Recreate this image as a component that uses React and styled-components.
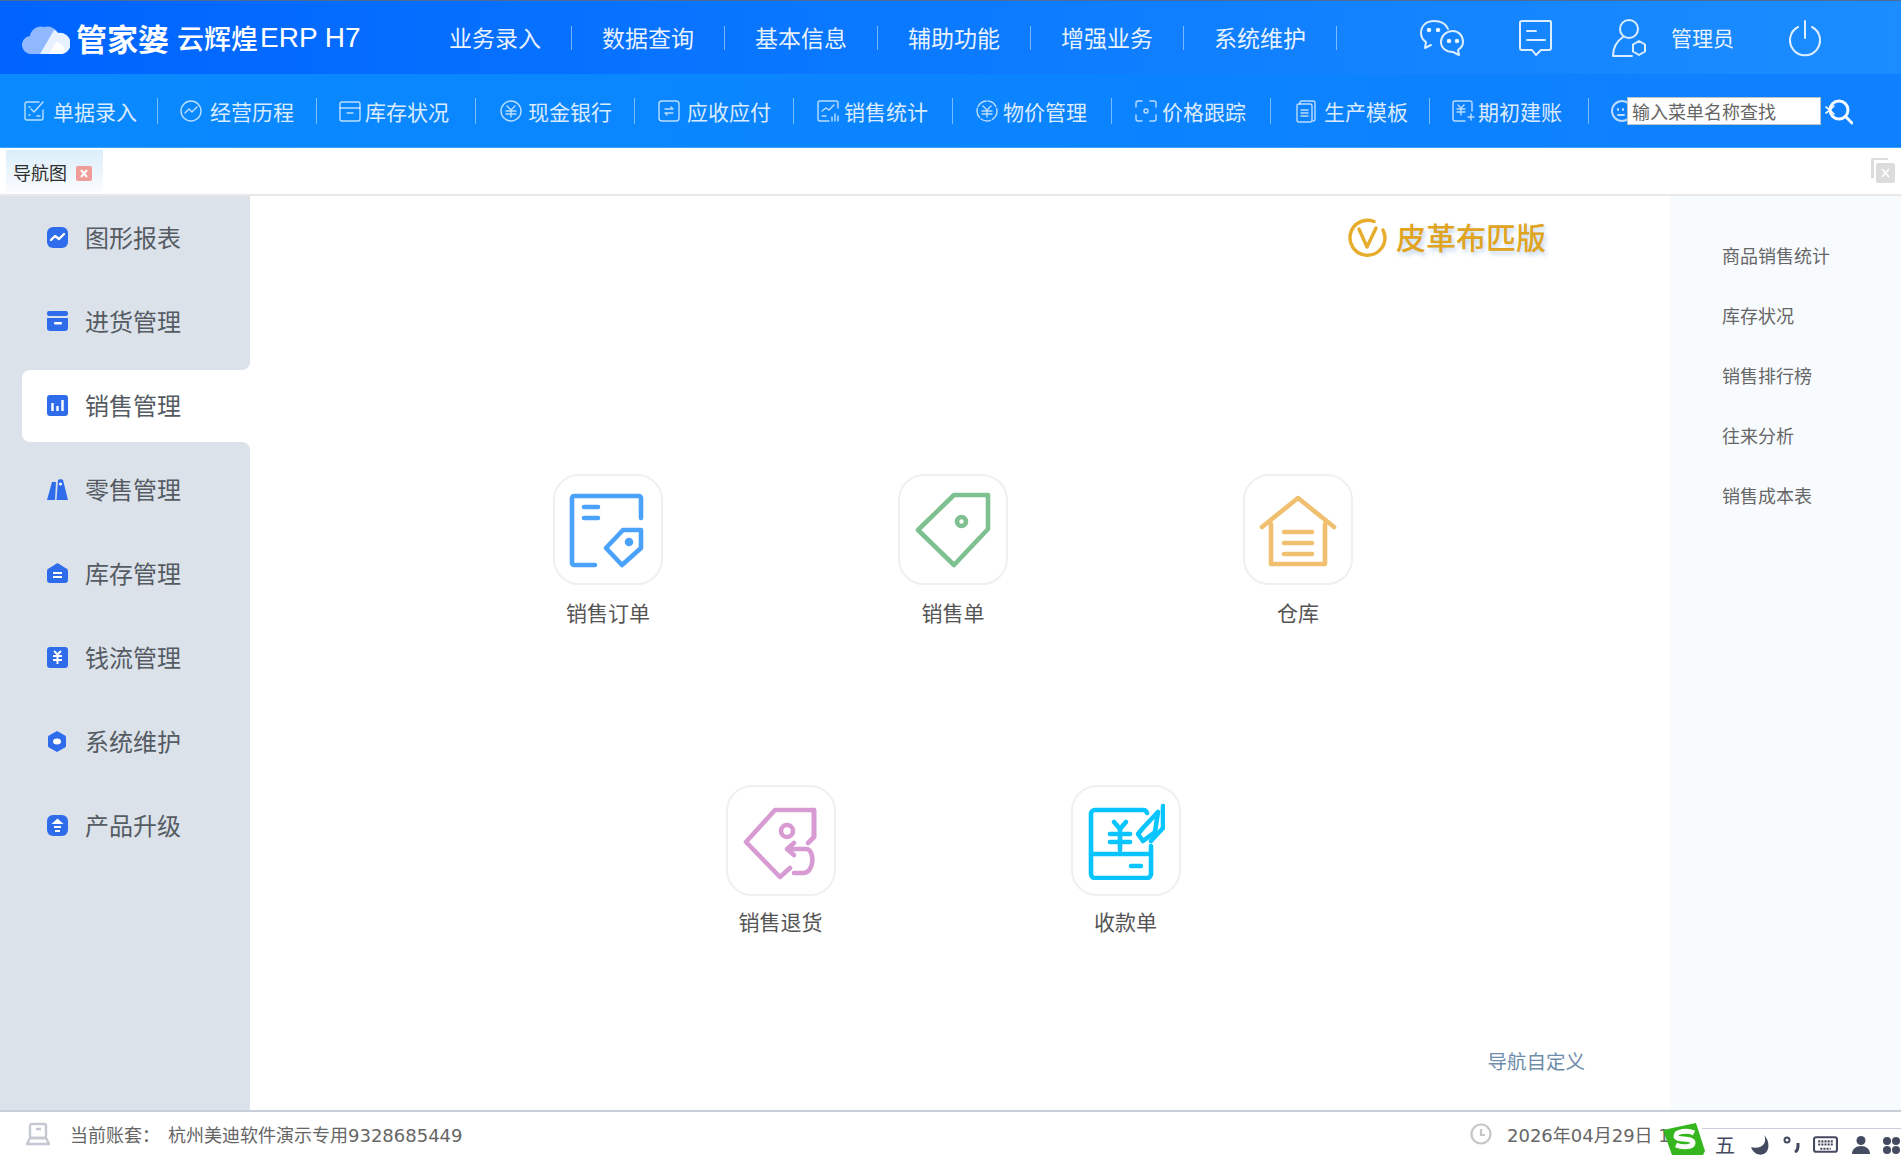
import React from "react";
import styled, { createGlobalStyle } from "styled-components";

const GlobalStyle = createGlobalStyle`
  html, body { margin: 0; padding: 0; background: #fff; }
  body { width: 1901px; height: 1155px; overflow: hidden; font-family: "Noto Sans CJK SC", "Noto Sans", sans-serif; }
  * { box-sizing: border-box; }
`;

const Page = styled.div`
  width: 1901px;
  height: 1155px;
  display: flex;
  flex-direction: column;
  position: relative;
  overflow: hidden;
`;

const Header = styled.header`
  height: 74px;
  flex: none;
  display: flex;
  align-items: center;
  border-top: 1px solid #4c6c96;
  background: linear-gradient(90deg, #0063ff 0%, #0a78ff 45%, #1c8dff 100%);
  color: rgba(255, 255, 255, 0.92);
`;

const Logo = styled.div`
  width: 419px;
  padding-left: 22px;
  display: flex;
  align-items: center;
  flex: none;
  color: #fff;
  white-space: nowrap;
`;

const LogoMain = styled.span`
  font-size: 31px;
  font-weight: 700;
  margin-left: 6px;
`;

const LogoSub = styled.span`
  font-size: 27px;
  font-weight: 500;
  margin-left: 8px;
`;

const LogoLatin = styled.span`
  font-family: "Liberation Sans", sans-serif;
  font-size: 28px;
  margin-left: 2px;
`;

const Menu = styled.nav`
  display: flex;
  align-items: center;
`;

const MenuItem = styled.span`
  font-size: 23px;
  width: 152px;
  padding-left: 30px;
  margin-bottom: 2px;
  white-space: nowrap;
`;

const Sep = styled.i`
  display: block;
  width: 1px;
  height: ${(p) => p.$h || 24}px;
  flex: none;
  background: rgba(255, 255, 255, 0.45);
`;

const HeaderTools = styled.div`
  display: flex;
  align-items: center;
  margin-left: 82px;
`;

const ToolIcon = styled.span`
  display: block;
  line-height: 0;
  margin-right: ${(p) => p.$gap}px;
`;

const UserName = styled.span`
  font-size: 21px;
  margin-right: 54px;
  margin-bottom: 2px;
  white-space: nowrap;
`;

const Toolbar = styled.div`
  height: 74px;
  flex: none;
  display: flex;
  align-items: center;
  position: relative;
  background: linear-gradient(90deg, #0a8aff 0%, #0a84ff 50%, #0f80ff 100%);
  border-bottom: 1px solid #3ba2ff;
  color: rgba(255, 255, 255, 0.86);
  overflow: hidden;
`;

const ToolItem = styled.div`
  display: flex;
  align-items: center;
  gap: ${(p) => p.$gap}px;
  width: ${(p) => p.$w}px;
  padding-left: ${(p) => p.$pad}px;
  flex: none;
  font-size: 21px;
  white-space: nowrap;
`;

const SearchBox = styled.div`
  position: absolute;
  left: 1627px;
  top: 23px;
  display: flex;
  align-items: center;
  gap: 4px;
`;

const SearchInput = styled.input`
  width: 194px;
  height: 28px;
  border: 1px solid #b9c3cc;
  background: #fff;
  padding: 0 0 0 4px;
  font: 18px "Noto Sans CJK SC", sans-serif;
  outline: none;
  &::placeholder { color: #666; opacity: 1; }
`;

const TabBar = styled.div`
  height: 48px;
  flex: none;
  display: flex;
  align-items: flex-end;
  justify-content: space-between;
  padding: 0 6px 1px 6px;
  background: #fff;
  border-bottom: 2px solid #e9e9e9;
`;

const Tab = styled.div`
  width: 97px;
  height: 43px;
  display: flex;
  align-items: center;
  gap: 9px;
  padding-left: 7px;
  font-size: 18px;
  color: #2f2f2f;
  background: linear-gradient(180deg, #dceefa 0%, #eef6fc 60%, #fbfdff 100%);
`;

const TabClose = styled.span`
  display: block;
  line-height: 0;
  margin-top: 4px;
`;

const CloseAll = styled.span`
  align-self: flex-start;
  line-height: 0;
  margin-top: 9px;
`;

const Body = styled.div`
  flex: 1;
  min-height: 0;
  display: flex;
`;

const Sidebar = styled.aside`
  width: 250px;
  flex: none;
  display: flex;
  flex-direction: column;
  padding-left: 22px;
  background: linear-gradient(90deg, #dce2ea 40px, #fff 40px);
`;

const SideItem = styled.div`
  height: ${(p) => (p.$active ? 72 : p.$next || p.$prev ? 90 : 84)}px;
  flex: none;
  display: flex;
  align-items: center;
  gap: 16px;
  padding: ${(p) => (p.$next ? "6px" : 0)} 0 ${(p) => (p.$prev ? "6px" : 0)} 25px;
  font-size: 24px;
  color: #555b62;
  background: ${(p) => (p.$active ? "#fff" : "#dce2ea")};
  border-radius: ${(p) =>
    p.$active ? "8px 0 0 8px" : p.$prev ? "0 0 8px 0" : p.$next ? "0 8px 0 0" : "0"};
`;

const SideIcon = styled.span`
  display: block;
  line-height: 0;
  margin-bottom: 2px;
`;

const SideLabel = styled.span`
  margin-bottom: 4px;
`;

const SideRest = styled.div`
  flex: 1;
  background: #dce2ea;
`;

const Main = styled.main`
  flex: 1;
  display: flex;
  flex-direction: column;
  background: #fff;
`;

const BrandRow = styled.div`
  display: flex;
  justify-content: flex-end;
  align-items: center;
  height: 50px;
  margin-top: 17px;
  padding-right: 124px;
  gap: 8px;
`;

const BrandText = styled.span`
  font-size: 30px;
  line-height: 50px;
  font-weight: 500;
  margin-bottom: 4px;
  color: #e0a420;
  text-shadow: 2px 3px 4px rgba(110, 160, 220, 0.45);
  white-space: nowrap;
`;

const Grid = styled.div`
  margin-top: 211px;
  padding-right: 14px;
  display: flex;
  flex-direction: column;
  gap: 158px;
`;

const GridRow = styled.div`
  display: flex;
  justify-content: center;
  gap: 235px;
`;

const Shortcut = styled.div`
  width: 110px;
  display: flex;
  flex-direction: column;
  align-items: center;
`;

const ShortcutBox = styled.div`
  width: 110px;
  height: 111px;
  border: 2px solid #f0f0f0;
  border-radius: 26px;
  background: #fff;
  display: flex;
  align-items: center;
  justify-content: center;
`;

const ShortcutLabel = styled.div`
  margin-top: ${(p) => p.$top}px;
  font-size: 21px;
  line-height: 30px;
  color: #555;
  white-space: nowrap;
`;

const Customize = styled.div`
  margin-top: auto;
  align-self: flex-end;
  padding: 0 85px 34px 0;
  font-size: 19.5px;
  line-height: 30px;
  color: #6f8cab;
`;

const RightPanel = styled.aside`
  width: 231px;
  flex: none;
  background: #f8fbfe;
  padding: 44px 0 0 52px;
  display: flex;
  flex-direction: column;
  gap: 30px;
`;

const RightLink = styled.div`
  font-size: 18px;
  line-height: 30px;
  color: #666;
`;

const StatusBar = styled.footer`
  height: 45px;
  flex: none;
  display: flex;
  align-items: center;
  padding: 0 0 0 26px;
  border-top: 2px solid #c9cfd8;
  background: #fff;
  font-family: "DejaVu Sans", "Noto Sans CJK SC", sans-serif;
  font-size: 18px;
  color: #666;
  white-space: nowrap;
`;

const AccountLabel = styled.span`
  margin-left: 20px;
  width: 98px;
`;

const StatusRight = styled.div`
  margin-left: auto;
  width: 431px;
  display: flex;
  align-items: center;
  gap: 15px;
`;

/* the input method bar sits on top of the status bar */
const ImeBar = styled.div`
  position: absolute;
  left: 1663px;
  top: 1123px;
  width: 238px;
  height: 32px;
  display: flex;
  align-items: flex-end;
`;

const ImeBack = styled.div`
  flex: 1;
  height: 27px;
  margin-left: -3px;
  background: #fff;
  border-top: 1px solid #ccd;
  display: flex;
  align-items: center;
  padding: 5px 0 0 13px;
  color: #444a60;
`;

const ImeChar = styled.span`
  font-size: 20px;
  line-height: 21px;
  width: 35px;
  flex: none;
`;

const ImeIcon = styled.span`
  display: block;
  line-height: 0;
  flex: none;
  width: ${(p) => p.$w}px;
`;

const Line = ({ size = 24, w, h, color = "#fff", sw = 1.4, children, fill = "none", vb = "0 0 24 24" }) => (
  <svg width={w || size} height={h || size} viewBox={vb} fill={fill} stroke={color} strokeWidth={sw} strokeLinecap="round" strokeLinejoin="round">
    {children}
  </svg>
);

const tc = "rgba(255,255,255,0.72)";

const tools = [
  { name: "单据录入", pad: 22, gap: 7, icon: <Line color={tc}><path d="M17 3H5a2 2 0 0 0-2 2v14a2 2 0 0 0 2 2h14a2 2 0 0 0 2-2v-8" /><path d="M9 10l3 3 9-10" /><path d="M7 8h1M7 16h1M15 17h3" /></Line> },
  { name: "经营历程", pad: 21, gap: 7, icon: <Line color={tc}><circle cx="12" cy="12" r="10" /><path d="M6 14l4-4 3 3 5-5" /></Line> },
  { name: "库存状况", pad: 21, gap: 3, icon: <Line color={tc}><rect x="2" y="3" width="20" height="19" rx="2" /><path d="M2 9h20M9 14h6" /></Line> },
  { name: "现金银行", pad: 23, gap: 5, icon: <Line color={tc}><circle cx="12" cy="12" r="10" /><path d="M8 7l4 4 4-4M7 12h10M7 15h10M12 11v7" /></Line> },
  { name: "应收应付", pad: 22, gap: 6, icon: <Line color={tc}><rect x="2" y="2" width="20" height="20" rx="3" /><path d="M8 10h8l-2-2M16 14H8l2 2" /></Line> },
  { name: "销售统计", pad: 22, gap: 4, icon: <Line color={tc}><path d="M22 9V4a2 2 0 0 0-2-2H4a2 2 0 0 0-2 2v16a2 2 0 0 0 2 2h9" /><path d="M6 12l4-3 3 2 5-5M6 17h4M16 22v-4M19 22v-7M22 22v-5" /></Line> },
  { name: "物价管理", pad: 22, gap: 4, icon: <Line color={tc}><circle cx="12" cy="12" r="10" strokeDasharray="10 2" /><path d="M8 7l4 4 4-4M7 12h10M7 15h10M12 11v7" /></Line> },
  { name: "价格跟踪", pad: 22, gap: 4, icon: <Line color={tc}><path d="M8 2H4a2 2 0 0 0-2 2v4M16 2h4a2 2 0 0 1 2 2v4M8 22H4a2 2 0 0 1-2-2v-4M16 22h4a2 2 0 0 0 2-2v-4" /><circle cx="12" cy="12" r="2" /></Line> },
  { name: "生产模板", pad: 23, gap: 6, icon: <Line color={tc}><path d="M6 5V4a2 2 0 0 1 2-2h11a2 2 0 0 1 2 2v16a2 2 0 0 1-2 2" /><rect x="3" y="5" width="15" height="18" rx="2" /><path d="M7 11h7M7 14h7M7 17h7" /></Line> },
  { name: "期初建账", pad: 21, gap: 3, icon: <Line color={tc}><path d="M21 12V4a2 2 0 0 0-2-2H4a2 2 0 0 0-2 2v16a2 2 0 0 0 2 2h10" /><path d="M7 6l3 3 3-3M6 10h8M6 13h8M10 9v7M20 15v6M17 18h6" /></Line> },
  { name: "常用菜单", pad: 21, gap: 5, icon: <Line color={tc} sw={2}><circle cx="12" cy="12" r="10" /><path d="M8 10v1M13 10v1M8 16h6" /></Line> },
];

const menus = ["业务录入", "数据查询", "基本信息", "辅助功能", "增强业务", "系统维护"];
const rightLinks = ["商品销售统计", "库存状况", "销售排行榜", "往来分析", "销售成本表"];

const sb = "#2f6ceb";
const Solid = ({ children }) => (
  <svg width="22" height="22" viewBox="0 0 22 22" fill={sb}>{children}</svg>
);

const sideItems = [
  { name: "图形报表", icon: <Solid><rect x="0" y="1" width="21" height="21" rx="6" /><path d="M4 14l4-4 4 3 5-5" fill="none" stroke="#fff" strokeWidth="2.4" strokeLinecap="round" strokeLinejoin="round" /></Solid> },
  { name: "进货管理", icon: <Solid><rect x="0" y="1" width="21" height="5" rx="2" /><path d="M0 8h21v10a3 3 0 0 1-3 3H3a3 3 0 0 1-3-3z" /><rect x="7" y="12" width="8" height="2.4" rx="1" fill="#fff" /></Solid> },
  { name: "销售管理", icon: <Solid><rect x="0" y="1" width="21" height="21" rx="3" /><path d="M5.500 9v8M10.500 12v5M15.500 6v11" stroke="#fff" strokeWidth="2.4" fill="none" /></Solid> },
  { name: "零售管理", icon: <Solid><path d="M5 4h4L8 22H0z" /><path d="M11 2c1-1 4-1 5 0l5 20H9.500z" /><circle cx="13.500" cy="6" r="1.500" fill="#fff" /></Solid> },
  { name: "库存管理", icon: <Solid><path d="M10.500 1l8 5a3 3 0 0 1 2.500 3v9a3 3 0 0 1-3 3H3a3 3 0 0 1-3-3V9a3 3 0 0 1 2.500-3z" /><path d="M6 11h9M6 15h9" stroke="#fff" strokeWidth="2.2" /></Solid> },
  { name: "钱流管理", icon: <Solid><rect x="0" y="1" width="21" height="21" rx="3" /><path d="M7 5l3.500 3.500L14 5M6 10h9M6 14h9M10.500 8v10" stroke="#fff" strokeWidth="2" fill="none" /></Solid> },
  { name: "系统维护", icon: <Solid><path d="M10 1l8 4.500a2 2 0 0 1 1 1.700v8.600a2 2 0 0 1-1 1.700L10 22 2 17.500a2 2 0 0 1-1-1.700V7.200a2 2 0 0 1 1-1.700z" /><ellipse cx="10" cy="11.500" rx="4" ry="3" fill="#fff" /></Solid> },
  { name: "产品升级", icon: <Solid><rect x="0" y="1" width="21" height="21" rx="6" /><path d="M10.500 4.500l6 5.500h-12z" fill="#fff" /><path d="M7 13h7M8 17h5" stroke="#fff" strokeWidth="2" /></Solid> },
];

const CardIcon = ({ color, children }) => (
  <svg width="78" height="78" viewBox="0 0 78 78" fill="none" stroke={color} strokeWidth="4.600" strokeLinecap="round" strokeLinejoin="round">
    {children}
  </svg>
);

const shortcutsTop = [
  {
    name: "销售订单",
    icon: <CardIcon color="#4ba2fb"><path d="M72 27V7a2 2 0 0 0-2-2H5a2 2 0 0 0-2 2v65a2 2 0 0 0 2 2h21" /><path d="M15 16h14M15 27h14" /><path d="M54 39h18v18L53 74 37 57z" /><circle cx="60" cy="51" r="2" fill="#4ba2fb" /></CardIcon>,
  },
  {
    name: "销售单",
    icon: <CardIcon color="#7ec08f"><path d="M40 4h34v34L40 74 4 39z" /><circle cx="47.500" cy="30.500" r="4.500" /></CardIcon>,
  },
  {
    name: "仓库",
    icon: <CardIcon color="#f0c070"><path d="M3 36L39 7l36 29" /><path d="M12 33v40h54V33" /><path d="M25 41h28M25 52h28M25 63h28" /></CardIcon>,
  },
];

const shortcutsBottom = [
  {
    name: "销售退货",
    icon: <CardIcon color="#d79ad2"><path d="M72 35V8H33L4 40l34 35 10-9" /><path d="M72 8v27l-6 6" /><circle cx="45" cy="29" r="6" /><path d="M46 47h18c9 0 9 24-3 24h-9" /><path d="M52 41l-7 6 7 6" /></CardIcon>,
  },
  {
    name: "收款单",
    icon: <CardIcon color="#08c4ff"><path d="M60 11a4 4 0 0 0-4-3H8a4 4 0 0 0-4 4v60a4 4 0 0 0 4 4h52a4 4 0 0 0 4-4V44" /><path d="M4 52h60M44 64h10" /><path d="M27 20l6 7 6-7M23 32h20M23 40h20M33 27v21" /><path d="M56 26l15-16-3 20-12 9-5-7z" /><path d="M76 4v22l-12 13" /></CardIcon>,
  },
];

function App() {
  return (
    <Page>
      <GlobalStyle />
      <Header>
        <Logo>
          <svg width="48" height="34" viewBox="0 0 48 34">
            <path d="M10 33a9 9 0 0 1-2-18 11 11 0 0 1 14-9 12 12 0 0 1 14 6 10 10 0 0 1 3 21z" fill="#8fb8ff" />
            <path d="M18 33L32 9a12 12 0 0 1 4 3 10 10 0 0 1 4 21z" fill="#e8f1ff" />
            <path d="M27 33l7-12a7 7 0 0 1 6 3 5 5 0 0 1 0 9z" fill="#fff" />
          </svg>
          <LogoMain>管家婆</LogoMain>
          <LogoSub>云辉煌</LogoSub>
          <LogoLatin>ERP H7</LogoLatin>
        </Logo>
        <Menu>
          {menus.map((m) => (
            <React.Fragment key={m}>
              <MenuItem>{m}</MenuItem>
              <Sep />
            </React.Fragment>
          ))}
        </Menu>
        <HeaderTools>
          <ToolIcon $gap={55}>
            <Line w={45} h={38} vb="0 0 45 38" color="rgba(255,255,255,0.85)" sw={2}>
              <path d="M29 10C27 5 22 2 15 2 7 2 2 7 2 14c0 4 2 7 5 9l-1 6 6-3" />
              <path d="M34 12c-7 0-12 5-12 11s5 10 12 10l6 3-1-5c3-2 5-5 5-8 0-6-4-11-10-11z" />
              <circle cx="10" cy="11" r="1.300" fill="#fff" /><circle cx="19" cy="11" r="1.300" fill="#fff" />
              <circle cx="30" cy="22" r="1.300" fill="#fff" /><circle cx="38" cy="22" r="1.300" fill="#fff" />
            </Line>
          </ToolIcon>
          <ToolIcon $gap={59}>
            <Line w={34} h={38} vb="0 0 34 38" color="rgba(255,255,255,0.85)" sw={2}>
              <path d="M3 2h28a2 2 0 0 1 1 1v26a2 2 0 0 1-2 2H22l-5 5-4-5H3a2 2 0 0 1-2-2V3a2 2 0 0 1 2-1z" />
              <path d="M8 12h9M8 21h18" />
            </Line>
          </ToolIcon>
          <ToolIcon $gap={25}>
            <Line w={34} h={40} vb="0 0 34 40" color="rgba(255,255,255,0.85)" sw={2}>
              <circle cx="17" cy="11" r="9" />
              <path d="M11 19C5 23 1 30 1 38h19" />
              <path d="M27 23l6 3.500v7L27 37l-6-3.500v-7z" />
            </Line>
          </ToolIcon>
          <UserName>管理员</UserName>
          <Line w={34} h={38} vb="0 0 34 38" color="rgba(255,255,255,0.85)" sw={2}>
            <path d="M10 8a15 15 0 1 0 14 0" />
            <path d="M17 2v17" />
          </Line>
        </HeaderTools>
      </Header>

      <Toolbar>
        {tools.map((t, i) => (
          <React.Fragment key={t.name}>
            <ToolItem $pad={t.pad} $gap={t.gap} $w={i === 0 ? 157 : 158}>
              {t.icon}
              {t.name}
            </ToolItem>
            {i < tools.length - 1 && <Sep $h={26} />}
          </React.Fragment>
        ))}
        <SearchBox>
          <SearchInput placeholder="输入菜单名称查找" />
          <Line w={28} h={28} vb="0 0 28 28" color="rgba(255,255,255,0.95)" sw={3}>
            <circle cx="14" cy="13" r="9" />
            <path d="M21 20l6 6" />
            <path d="M1 10l4 3-4 3M9 9l-4 4 4 4" strokeWidth="1.600" />
          </Line>
        </SearchBox>
      </Toolbar>

      <TabBar>
        <Tab>
          导航图
          <TabClose>
            <svg width="16" height="15" viewBox="0 0 16 15">
              <rect width="16" height="15" rx="2" fill="#ef9b97" />
              <path d="M5 4l6 7M11 4l-6 7" stroke="#fff" strokeWidth="2" />
            </svg>
          </TabClose>
        </Tab>
        <CloseAll>
          <svg width="25" height="26" viewBox="0 0 25 26" fill="#dcdcdc">
            <path d="M1 3a2 2 0 0 1 2-2h15v2H4v18H1z" />
            <rect x="6" y="6" width="19" height="20" rx="2" />
            <path d="M12 12l7 8M19 12l-7 8" stroke="#fff" strokeWidth="1.600" />
          </svg>
        </CloseAll>
      </TabBar>

      <Body>
        <Sidebar>
          {sideItems.map((s, i) => (
            <SideItem key={s.name} $active={i === 2} $prev={i === 1} $next={i === 3}>
              <SideIcon>{s.icon}</SideIcon>
              <SideLabel>{s.name}</SideLabel>
            </SideItem>
          ))}
          <SideRest />
        </Sidebar>

        <Main>
          <BrandRow>
            <svg width="40" height="40" viewBox="0 0 40 40" fill="none" stroke="#e6ad2c" strokeWidth="3.400" strokeLinecap="round" strokeLinejoin="round">
              <path d="M26 3.500A17.500 17.500 0 1 0 37 20c0-3-1-6-2-8" />
              <path d="M11 11l8 18 9-19" />
            </svg>
            <BrandText>皮革布匹版</BrandText>
          </BrandRow>
          <Grid>
            <GridRow>
              {shortcutsTop.map((s) => (
                <Shortcut key={s.name}>
                  <ShortcutBox>{s.icon}</ShortcutBox>
                  <ShortcutLabel $top={12}>{s.name}</ShortcutLabel>
                </Shortcut>
              ))}
            </GridRow>
            <GridRow>
              {shortcutsBottom.map((s) => (
                <Shortcut key={s.name}>
                  <ShortcutBox>{s.icon}</ShortcutBox>
                  <ShortcutLabel $top={10}>{s.name}</ShortcutLabel>
                </Shortcut>
              ))}
            </GridRow>
          </Grid>
          <Customize>导航自定义</Customize>
        </Main>

        <RightPanel>
          {rightLinks.map((r) => (
            <RightLink key={r}>{r}</RightLink>
          ))}
        </RightPanel>
      </Body>

      <StatusBar>
        <svg width="24" height="24" viewBox="0 0 24 24" fill="none" stroke="#c3c8d2" strokeWidth="2.400" strokeLinejoin="round">
          <rect x="4" y="2" width="16" height="14" rx="2" />
          <path d="M1 22l3-6h16l3 6zM10 7h5" />
        </svg>
        <AccountLabel>当前账套：</AccountLabel>
        <span>杭州美迪软件演示专用9328685449</span>
        <StatusRight>
          <svg width="22" height="22" viewBox="0 0 22 22" fill="none" stroke="#c6c6c6" strokeWidth="2.200">
            <circle cx="11" cy="11" r="9.500" />
            <path d="M11 6v6h4" />
          </svg>
          <span>2026年04月29日 1</span>
        </StatusRight>
      </StatusBar>

      <ImeBar>
        <svg width="42" height="32" viewBox="0 0 42 32" style={{ flex: "none", zIndex: 1 }}>
          <path d="M0 7L33 0l9 28-2 4H9z" fill="#35b61e" />
          <path d="M31 10c-6-3-18-2-18 3 0 5 17 1 17 7 0 4-10 5-17 2" fill="none" stroke="#fff" strokeWidth="5" />
        </svg>
        <ImeBack>
          <ImeChar>五</ImeChar>
          <ImeIcon $w={33}>
            <svg width="22" height="22" viewBox="0 0 20 20"><path d="M13 1c3 8-3 13-12 11 2 6 8 8 12 6s6-10 0-17z" fill="#444a60" /></svg>
          </ImeIcon>
          <ImeIcon $w={30}>
            <svg width="18" height="20" viewBox="0 0 18 20" fill="none" stroke="#444a60" strokeWidth="2"><circle cx="4" cy="5" r="2.500" /><path d="M15 8v3c0 3-1 5-3 6" strokeWidth="3" /></svg>
          </ImeIcon>
          <ImeIcon $w={39}>
            <svg width="25" height="17" viewBox="0 0 24 16" fill="none" stroke="#444a60" strokeWidth="2"><rect x="1" y="1" width="22" height="14" rx="2" /><path d="M5 5h14M5 8h14M7 12h10" strokeDasharray="2 1" /></svg>
          </ImeIcon>
          <ImeIcon $w={30}>
            <svg width="18" height="18" viewBox="0 0 18 18" fill="#444a60"><circle cx="9" cy="4.500" r="4.500" /><path d="M0 18c0-5 4-8 9-8s9 3 9 8z" /></svg>
          </ImeIcon>
          <ImeIcon $w={19}>
            <svg width="19" height="18" viewBox="0 0 19 18" fill="#444a60"><circle cx="5" cy="5" r="4" /><circle cx="14" cy="5" r="4" /><circle cx="5" cy="14" r="4" /><circle cx="14" cy="14" r="4" /></svg>
          </ImeIcon>
        </ImeBack>
      </ImeBar>
    </Page>
  );
}

export default App;
